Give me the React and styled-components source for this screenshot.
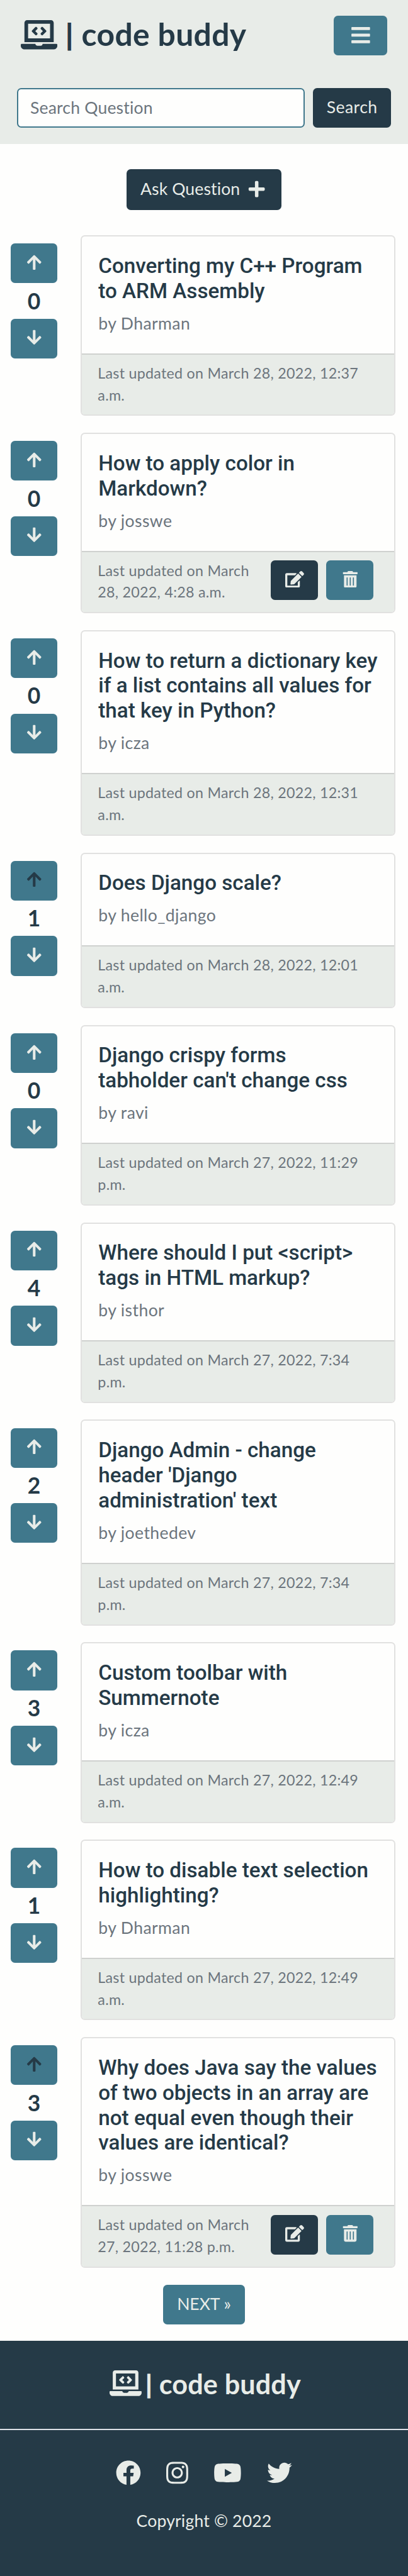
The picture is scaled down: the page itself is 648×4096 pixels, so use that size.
import React from "react";
import styled, { createGlobalStyle } from "styled-components";
import {
  FaArrowDown,
  FaArrowUp,
  FaBars,
  FaEdit,
  FaFacebook,
  FaInstagram,
  FaLaptopCode,
  FaPlus,
  FaTrashAlt,
  FaTwitter,
  FaYoutube,
} from "react-icons/fa";

const u = (n) => `${(n * 0.55366).toFixed(3)}px`;

const color = {
  page: "#fefefd",
  mist: "#e8ece8",
  navy: "#253a47",
  teal: "#40788c",
  muted: "#6c757d",
  cardBorder: "#e1e1e0",
  divider: "#cfd1cf",
  rule: "#dee1e8",
};

const GlobalStyle = createGlobalStyle`
  *, *::before, *::after { box-sizing: border-box; }
  body {
    margin: 0;
    background: ${color.page};
    color: ${color.navy};
    font-family: Lato, "Open Sans", sans-serif;
    font-variant-ligatures: none;
    letter-spacing: 0.011em;
  }
`;

const Page = styled.div`
  display: flex;
  flex-direction: column;
  height: 4096px;
  overflow: hidden;
`;

const Header = styled.header`
  height: ${u(414)};
  flex: none;
  background: ${color.mist};
  padding-top: ${u(45)};
`;

const NavRow = styled.div`
  display: flex;
  align-items: flex-start;
  justify-content: space-between;
  padding: 0 ${u(60)};
  height: ${u(207)};
`;

const Brand = styled.a`
  display: flex;
  align-items: flex-start;
  color: ${(p) => (p.$light ? color.mist : color.navy)};
  font-weight: 700;
  font-size: ${(p) => u(p.$size)};
  line-height: ${(p) => u(p.$size * 1.2)};

  svg {
    display: block;
    flex: none;
    margin-top: ${(p) => u(p.$drop || 0)};
    width: ${(p) => u(p.$icon)};
    height: ${(p) => u(p.$icon * 0.8)};
  }

  span {
    margin-top: ${(p) => u(-(p.$raise || 0))};
  }
`;

const BrandBar = styled.span`
  margin-left: ${(p) => u(p.$gap)};
  width: ${(p) => u(p.$width)};
  font-size: 0.91em;
  -webkit-text-stroke: 1px currentColor;
`;

const BrandName = styled.span`
  letter-spacing: ${(p) => p.$tracking};
  white-space: nowrap;
`;

const Button = styled.button`
  display: flex;
  align-items: center;
  justify-content: center;
  flex: none;
  width: ${(p) => u(p.$width)};
  height: ${(p) => u(p.$height || 114)};
  padding: 0;
  border: 0;
  border-radius: ${u(12)};
  background: ${(p) => (p.$dark ? color.navy : color.teal)};
  color: ${(p) => (p.$voted ? color.navy : color.mist)};
  font: inherit;
  font-size: ${u(48)};
  line-height: ${u(72)};
  letter-spacing: ${(p) => p.$tracking || "inherit"};

  svg {
    display: block;
    flex: none;
    width: ${(p) => u(p.$iconWidth || p.$icon || 48)};
    height: ${(p) => u(p.$icon || 48)};
    margin-bottom: ${(p) => u(p.$lift || 0)};
  }
`;

const ButtonLabel = styled.span`
  margin-bottom: ${u(1)};
  white-space: nowrap;
`;

const SearchForm = styled.form`
  display: flex;
  gap: ${u(24)};
  padding: 0 ${u(48)};
  margin: 0;
`;

const SearchInput = styled.input`
  flex: 1;
  min-width: 0;
  height: ${u(114)};
  border: 2px solid ${color.teal};
  border-radius: ${u(12)};
  background: ${color.page};
  padding: 0 ${u(35)} ${u(1)};
  font: inherit;
  font-size: ${u(48)};
  letter-spacing: 0.0067em;

  &::placeholder {
    color: ${color.muted};
    opacity: 1;
  }
`;

const AskRow = styled.div`
  display: flex;
  flex: none;
  justify-content: center;
  padding: ${u(72)} 0 ${u(72.6)};

  svg { margin-left: ${u(21)}; margin-right: ${u(5)}; }
`;

const Question = styled.article`
  display: flex;
  flex: none;
  align-items: flex-start;
  padding-left: ${u(30)};
  margin-bottom: ${u(48)};
`;

const Votes = styled.div`
  display: flex;
  flex-direction: column;
  width: ${u(202)};
  padding-top: ${u(24)};
`;

const VoteCount = styled.div`
  width: ${u(135)};
  height: ${u(102)};
  padding-top: ${u(13)};
  text-align: center;
  font-size: ${u(64)};
  line-height: ${u(77)};
  font-weight: 700;
  letter-spacing: 0;
`;

const Card = styled.div`
  width: ${u(903)};
  border: 2px solid ${color.cardBorder};
  border-radius: ${u(12)};
  overflow: hidden;
`;

const CardBody = styled.div`
  height: ${(p) => u(195 + 72 * p.$lines)};
  margin-top: -2px;
  padding: ${u(52)} 0 0 ${u(46.6)};
`;

const Title = styled.h5`
  margin: 0 0 ${u(22)};
  font-family: Roboto, sans-serif;
  font-weight: 500;
  font-size: ${u(60)};
  line-height: ${u(72)};
  letter-spacing: 0;
  white-space: pre-line;
`;

const Author = styled.p`
  margin: 0;
  color: ${color.muted};
  font-size: ${u(48)};
  line-height: ${u(72)};
  letter-spacing: 0.015em;
`;

const CardFooter = styled.div`
  display: flex;
  justify-content: space-between;
  height: ${u(176.4)};
  border-top: 2px solid ${color.divider};
  background: ${color.mist};
  padding: ${u(24)} ${u(60)} 0 ${u(45)};
`;

const Updated = styled.small`
  margin-top: ${u(-2.4)};
  color: ${color.muted};
  font-size: ${u(42)};
  line-height: ${u(63)};
  white-space: pre-line;
  letter-spacing: 0.0115em;
`;

const Actions = styled.div`
  display: flex;
  gap: ${u(24)};
`;

const Pager = styled.nav`
  display: flex;
  flex: none;
  justify-content: center;
  height: ${u(162)};
`;

const Footer = styled.footer`
  flex: 1;
  display: flex;
  flex-direction: column;
  align-items: center;
  background: ${color.navy};
  color: ${color.mist};
`;

const FooterBrand = styled.div`
  display: flex;
  justify-content: flex-start;
  align-self: stretch;
  height: ${u(255)};
  padding: ${u(84)} 0 0 ${u(315)};
  border-bottom: 2px solid ${color.rule};
`;

const Social = styled.div`
  display: flex;
  gap: ${u(72)};
  margin-top: ${u(87)};
`;

const SocialLink = styled.a`
  display: block;
  width: ${(p) => u(p.$width)};
  height: ${u(72)};

  svg {
    display: block;
    width: 100%;
    height: 100%;
  }
`;

const Copyright = styled.p`
  margin: ${u(67.5)} 0 0;
  font-size: ${u(48)};
  line-height: ${u(72)};
`;

const questions = [
  { votes: 0, title: ["Converting my C++ Program", "to ARM Assembly"], author: "Dharman", updated: ["Last updated on March 28, 2022, 12:37", "a.m."] },
  { votes: 0, title: ["How to apply color in", "Markdown?"], author: "josswe", updated: ["Last updated on March", "28, 2022, 4:28 a.m."], own: true },
  { votes: 0, title: ["How to return a dictionary key", "if a list contains all values for", "that key in Python?"], author: "icza", updated: ["Last updated on March 28, 2022, 12:31", "a.m."] },
  { votes: 1, voted: true, title: ["Does Django scale?"], author: "hello_django", updated: ["Last updated on March 28, 2022, 12:01", "a.m."] },
  { votes: 0, title: ["Django crispy forms", "tabholder can't change css"], author: "ravi", updated: ["Last updated on March 27, 2022, 11:29", "p.m."] },
  { votes: 4, title: ["Where should I put <script>", "tags in HTML markup?"], author: "isthor", updated: ["Last updated on March 27, 2022, 7:34", "p.m."] },
  { votes: 2, title: ["Django Admin - change", "header 'Django", "administration' text"], author: "joethedev", updated: ["Last updated on March 27, 2022, 7:34", "p.m."] },
  { votes: 3, title: ["Custom toolbar with", "Summernote"], author: "icza", updated: ["Last updated on March 27, 2022, 12:49", "a.m."] },
  { votes: 1, title: ["How to disable text selection", "highlighting?"], author: "Dharman", updated: ["Last updated on March 27, 2022, 12:49", "a.m."] },
  { votes: 3, voted: true, title: ["Why does Java say the values", "of two objects in an array are", "not equal even though their", "values are identical?"], author: "josswe", updated: ["Last updated on March", "27, 2022, 11:28 p.m."], own: true },
];

function QuestionItem({ q }) {
  return (
    <Question>
      <Votes>
        <Button $width={135} $voted={q.voted} $lift={6} aria-label="Upvote"><FaArrowUp /></Button>
        <VoteCount>{q.votes}</VoteCount>
        <Button $width={135} $lift={6} aria-label="Downvote"><FaArrowDown /></Button>
      </Votes>
      <Card>
        <CardBody $lines={q.title.length}>
          <Title>{q.title.join("\n")}</Title>
          <Author>by {q.author}</Author>
        </CardBody>
        <CardFooter>
          <Updated>{q.updated.join("\n")}</Updated>
          {q.own && (
            <Actions>
              <Button $width={135} $dark $iconWidth={54} $lift={6} aria-label="Edit"><FaEdit /></Button>
              <Button $width={135} $lift={6} aria-label="Delete"><FaTrashAlt /></Button>
            </Actions>
          )}
        </CardFooter>
      </Card>
    </Question>
  );
}

export default function App() {
  return (
    <Page>
      <GlobalStyle />
      <Header>
        <NavRow>
          <Brand $size={90} $icon={105} $drop={13.5}>
            <FaLaptopCode />
            <BrandBar $gap={23.3} $width={45.7}>|</BrandBar>
            <BrandName $tracking="0.0073em">code buddy</BrandName>
          </Brand>
          <Button $width={153} $icon={61} $lift={3} aria-label="Menu"><FaBars /></Button>
        </NavRow>
        <SearchForm>
          <SearchInput placeholder="Search Question" />
          <Button type="button" $width={225} $dark $tracking="0.0177em"><ButtonLabel>Search</ButtonLabel></Button>
        </SearchForm>
      </Header>
      <AskRow>
        <Button $width={444} $height={117} $dark $icon={53} $lift={3} $tracking="0.004em">
          <ButtonLabel>Ask Question</ButtonLabel>
          <FaPlus />
        </Button>
      </AskRow>
      {questions.map((q) => (
        <QuestionItem key={q.title[0]} q={q} />
      ))}
      <Pager>
        <Button $width={234} $tracking="-0.0015em"><ButtonLabel>NEXT »</ButtonLabel></Button>
      </Pager>
      <Footer>
        <FooterBrand>
          <Brand $light $size={78} $icon={92} $raise={7}>
            <FaLaptopCode />
            <BrandBar $gap={10.8} $width={38.8}>|</BrandBar>
            <BrandName $tracking="0.0029em">code buddy</BrandName>
          </Brand>
        </FooterBrand>
        <Social>
          <SocialLink $width={72} aria-label="Facebook"><FaFacebook /></SocialLink>
          <SocialLink $width={63} aria-label="Instagram"><FaInstagram /></SocialLink>
          <SocialLink $width={81} aria-label="YouTube"><FaYoutube /></SocialLink>
          <SocialLink $width={72} aria-label="Twitter"><FaTwitter /></SocialLink>
        </Social>
        <Copyright>Copyright © 2022</Copyright>
      </Footer>
    </Page>
  );
}
